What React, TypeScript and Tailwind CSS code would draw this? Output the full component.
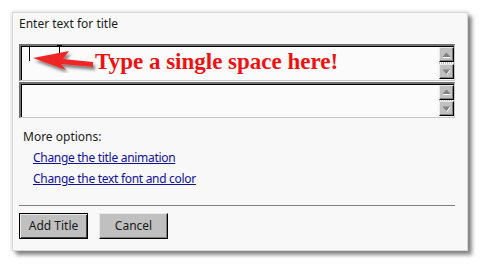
import * as React from 'react';

const ScrollButton = ({ dir }: { dir: 'up' | 'down' }) => (
  <div className="w-[15px] h-[15px] bg-[#c0c0c0] border-t border-l border-[#e8e8e8] border-r border-b border-r-black border-b-black flex items-center justify-center shadow-[inset_-1px_-1px_0_#808080]">
    <svg width="9" height="6" viewBox="0 0 9 6">
      {dir === 'up' ? (
        <>
          <polygon points="4.5,0.5 8.5,5 0.5,5" fill="#808080" />
          <line x1="1" y1="5.5" x2="8.5" y2="5.5" stroke="#ffffff" strokeWidth="1" />
        </>
      ) : (
        <>
          <polygon points="0.5,0.5 8.5,0.5 4.5,5" fill="#808080" />
          <line x1="8" y1="1" x2="5" y2="5.5" stroke="#ffffff" strokeWidth="1" />
        </>
      )}
    </svg>
  </div>
);

const TextBox = ({ h, children }: { h: string; children?: React.ReactNode }) => (
  <div
    className={`relative flex shrink-0 ${h} bg-[#fbfbfb] border-t-2 border-l-2 border-t-[#707070] border-l-[#707070] border-r border-b border-r-[#c8c8c8] border-b-[#c8c8c8] shadow-[inset_1px_1px_0_#000]`}
  >
    <div className="flex-1 relative">{children}</div>
    <div className="flex flex-col justify-between pt-[1px] pb-[1px]">
      <ScrollButton dir="up" />
      <div className="h-[2px] bg-[repeating-linear-gradient(90deg,#c0c0c0_0_1px,#ffffff_1px_2px)]" />
      <ScrollButton dir="down" />
    </div>
  </div>
);

export default function App() {
  return (
    <div className="w-[482px] h-[265px] bg-white pt-[12px] pl-[12px] font-['Noto_Sans',sans-serif] text-[12px] text-[#1a1a1a]">
      <div className="w-[456px] bg-[#f8f8f8] border border-[#d8d8d8] shadow-[0_0_4px_rgba(0,0,0,0.2),4px_4px_4px_rgba(0,0,0,0.45)] pl-[6px] pr-[12px] pt-[3px] pb-[11px] flex flex-col">
        <div className="h-[16px] leading-[16px]">Enter text for title</div>
        <div className="mt-[12px] flex flex-col gap-[1px]">
          <TextBox h="h-[37px]">
            <div className="absolute left-[8px] top-[1px] w-[1px] h-[14px] bg-black" />
            <div className="absolute left-[38px] top-[-1px] w-[1px] h-[14px] bg-black" />
            <div className="absolute left-[36px] top-[-1px] w-[5px] h-[1px] bg-black" />
            <svg className="absolute left-[10px] top-[3px]" width="80" height="24" viewBox="0 0 80 24">
              <defs>
                <filter id="sh" x="-20%" y="-50%" width="150%" height="200%">
                  <feGaussianBlur in="SourceAlpha" stdDeviation="1.6" />
                  <feOffset dx="2" dy="3" result="b" />
                  <feComponentTransfer>
                    <feFuncA type="linear" slope="0.5" />
                  </feComponentTransfer>
                  <feMerge>
                    <feMergeNode />
                    <feMergeNode in="SourceGraphic" />
                  </feMerge>
                </filter>
              </defs>
              <polygon
                points="2,9 38,2 32,10 62,13 62,18 30,15 35,21"
                fill="#f02828"
                filter="url(#sh)"
              />
            </svg>
            <div className="absolute left-[74px] top-[3px] text-[23px] leading-[26px] font-bold text-[#ee1111] font-['Liberation_Serif',serif] whitespace-nowrap">
              Type a single space here!
            </div>
          </TextBox>
          <TextBox h="h-[36px]" />
        </div>
        <div className="mt-[11px] pl-[4px] h-[16px] leading-[16px]">More options:</div>
        <div className="pl-[14px] mt-[5px] flex flex-col gap-[5px] tracking-[-0.3px]">
          <a href="#" className="h-[16px] leading-[16px] text-[#10109a] underline">
            Change the title animation
          </a>
          <a href="#" className="h-[16px] leading-[16px] text-[#10109a] underline">
            Change the text font and color
          </a>
        </div>
        <div className="mt-[18px] h-[1px] shrink-0 bg-[#808080]" />
        <div className="mt-[7px] flex gap-[11px]">
          <button className="w-[69px] h-[26px] bg-[#c0c0c0] border border-black shadow-[inset_1px_1px_0_#e8e8e8,inset_-1px_-1px_0_#404040] text-[12px]">
            Add Title
          </button>
          <button className="w-[69px] h-[26px] bg-[#c0c0c0] border-t border-l border-[#e8e8e8] border-r border-b border-r-black border-b-black shadow-[inset_-1px_-1px_0_#808080] text-[12px]">
            Cancel
          </button>
        </div>
      </div>
    </div>
  );
}
